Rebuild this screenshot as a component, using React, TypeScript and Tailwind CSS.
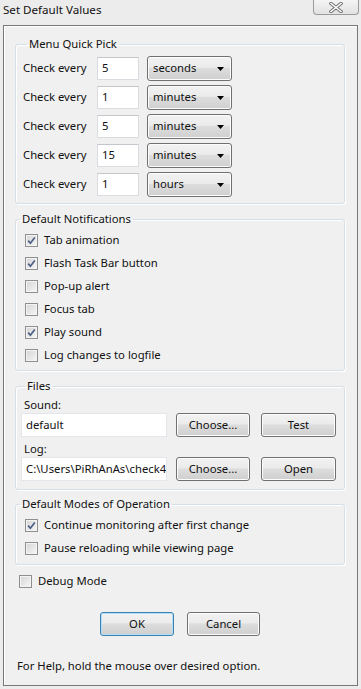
import React from "react";

const FONT = "font-['Noto_Sans','Open_Sans',sans-serif]";

const btnBg =
  "bg-[linear-gradient(#f2f2f2,#ebebeb_45%,#dddddd_50%,#cfcfcf)]";

const Checkbox = ({ checked }: { checked?: boolean }) => (
  <span className="w-[13px] h-[13px] border border-[#8f8f8f] bg-[linear-gradient(135deg,#d4d4d4,#f7f7f7)] shadow-[inset_0_0_0_1px_#f4f4f4] flex items-center justify-center shrink-0">
    {checked && (
      <svg width="11" height="11" viewBox="0 0 11 11">
        <path d="M2.2 5.6 L4.4 8.2 L8.8 2.4" fill="none" stroke="#4b5e86" strokeWidth="1.7" />
      </svg>
    )}
  </span>
);

const CheckRow = ({ label, checked }: { label: string; checked?: boolean }) => (
  <div className="h-[23px] flex items-center pl-[9px]">
    <Checkbox checked={checked} />
    <span className="ml-[6px]">{label}</span>
  </div>
);

const Group = ({ title, children, className = "" }: { title: string; children: React.ReactNode; className?: string }) => (
  <fieldset className={`border border-[#d5dfe5] rounded-[3px] shadow-[inset_1px_1px_0_#fff,1px_1px_0_#fff] ${className}`}>
    <legend className="ml-[4px] px-[2px] leading-[16px]">{title}</legend>
    {children}
  </fieldset>
);

const Select = ({ value }: { value: string }) => (
  <div className={`ml-[8px] w-[85px] h-[25px] border border-[#707070] rounded-[3px] ${btnBg} shadow-[inset_0_0_0_1px_#fcfcfc] flex items-center justify-between pl-[5px] pr-[7px]`}>
    <span>{value}</span>
    <svg width="7" height="4" viewBox="0 0 7 4">
      <path d="M0 0 H7 L3.5 4 Z" fill="#000" />
    </svg>
  </div>
);

const Button = ({ label, w, def }: { label: string; w: string; def?: boolean }) => (
  <div
    className={`${w} h-[24px] rounded-[3px] border ${def ? "border-[#3c7fb1] shadow-[inset_0_0_0_1px_#b4e0f5]" : "border-[#707070] shadow-[inset_0_0_0_1px_#fcfcfc]"} ${btnBg} flex items-center justify-center`}
  >
    {label}
  </div>
);

const rows = [
  { n: "5", u: "seconds" },
  { n: "1", u: "minutes" },
  { n: "5", u: "minutes" },
  { n: "15", u: "minutes" },
  { n: "1", u: "hours" },
];

export default function App() {
  return (
    <div className={`${FONT} text-[11.3px] text-[#111] w-[361px] h-[689px] bg-[#ececec] flex flex-col`}>
      <div className="h-[25px] flex items-start justify-between">
        <span className="ml-[3px] mt-[1px] text-[11.6px] leading-[18px]">Set Default Values</span>
        <div className="mr-[2px] w-[46px] h-[15px] border border-t-0 border-[#9a9a9a] rounded-b-[4px] bg-[linear-gradient(#f4f4f4,#e2e2e2)] flex items-center justify-center">
          <svg width="14" height="11" viewBox="0 0 14 11">
            <path d="M2 1.5 L12 9.5 M12 1.5 L2 9.5" stroke="#6f6f6f" strokeWidth="3.4" strokeLinecap="square" />
            <path d="M2 1.5 L12 9.5 M12 1.5 L2 9.5" stroke="#ffffff" strokeWidth="1.6" strokeLinecap="square" />
          </svg>
        </div>
      </div>

      <div className="mx-[3px] h-[661px] border border-[#777] bg-[#f0f0f0] shadow-[inset_1px_1px_0_#fff] pl-[11px] pr-[12px] pt-[10px] flex flex-col">
        <Group title="Menu Quick Pick" className="pl-[7px] pt-[4px] pb-[6px]">
          <div className="flex flex-col gap-[4px]">
            {rows.map((r, i) => (
              <div key={i} className="flex items-center h-[25px]">
                <span className="w-[74px]">Check every</span>
                <div className="w-[42px] h-[23px] bg-white border border-[#d9dce0] border-t-[#c3c6ca] flex items-center pl-[4px]">
                  {r.n}
                </div>
                <Select value={r.u} />
              </div>
            ))}
          </div>
        </Group>

        <Group title="Default Notifications" className="mt-[7px] pt-[2px] pb-[3px]">
          <CheckRow label="Tab animation" checked />
          <CheckRow label="Flash Task Bar button" checked />
          <CheckRow label="Pop-up alert" />
          <CheckRow label="Focus tab" />
          <CheckRow label="Play sound" checked />
          <CheckRow label="Log changes to logfile" />
        </Group>

        <Group title="Files" className="mt-[7px] pl-[5px] pb-[8px]">
          <div className="pl-[3px] mt-[3px] leading-[16px]">Sound:</div>
          <div className="flex items-center h-[24px]">
            <div className="w-[146px] h-[24px] bg-white border border-[#e3e6ea] flex items-center pl-[4px]">default</div>
            <div className="ml-[9px]"><Button label="Choose..." w="w-[74px]" /></div>
            <div className="ml-[11px]"><Button label="Test" w="w-[75px]" /></div>
          </div>
          <div className="pl-[3px] mt-[4px] leading-[16px]">Log:</div>
          <div className="flex items-center h-[24px]">
            <div className="w-[146px] h-[24px] bg-white border border-[#e3e6ea] flex items-center pl-[4px] overflow-hidden whitespace-nowrap">
              <span className="w-[140px] overflow-hidden">C:\Users\PiRhAnAs\check4</span>
            </div>
            <div className="ml-[9px]"><Button label="Choose..." w="w-[74px]" /></div>
            <div className="ml-[11px]"><Button label="Open" w="w-[75px]" /></div>
          </div>
        </Group>

        <Group title="Default Modes of Operation" className="mt-[6px] pt-[2px] pb-[4px]">
          <CheckRow label="Continue monitoring after first change" checked />
          <CheckRow label="Pause reloading while viewing page" />
        </Group>

        <div className="mt-[8px] h-[16px] flex items-center pl-[4px]">
          <Checkbox />
          <span className="ml-[6px]">Debug Mode</span>
        </div>

        <div className="mt-[23px] flex justify-center gap-[13px]">
          <Button label="OK" w="w-[74px]" def />
          <Button label="Cancel" w="w-[73px]" />
        </div>

        <div className="mt-[22px] pl-[2px] leading-[16px]">For Help, hold the mouse over desired option.</div>
      </div>
    </div>
  );
}
